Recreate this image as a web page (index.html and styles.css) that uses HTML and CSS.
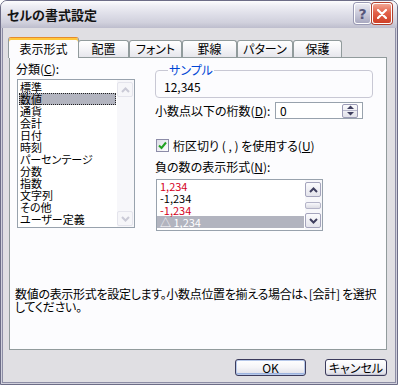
FILE: index.html
```html
<!DOCTYPE html>
<html lang="ja">
<head>
<meta charset="utf-8">
<title>セルの書式設定</title>
<link rel="stylesheet" href="styles.css">
</head>
<body>
<div class="window">
  <div class="titlebar">
    <span class="title">セルの書式設定</span>
    <div class="caption-buttons">
      <span class="cap-btn help">?</span>
      <span class="cap-btn close"><svg width="10" height="10" viewBox="0 0 10 10"><path d="M1 1L9 9M9 1L1 9" stroke="#fff" stroke-width="2.2" stroke-linecap="round"/></svg></span>
    </div>
  </div>
  <div class="client">
    <div class="tabs">
      <div class="tab active t1">表示形式</div>
      <div class="tab t2">配置</div>
      <div class="tab t3">フォント</div>
      <div class="tab t4">罫線</div>
      <div class="tab t5">パターン</div>
      <div class="tab t6">保護</div>
    </div>
    <div class="panel">
      <div class="panel-top">
        <div class="col-left">
          <div class="label">分類(<u>C</u>):</div>
          <div class="listbox cat">
            <div class="items">
              <div class="item">標準</div>
              <div class="item selected focus">数値</div>
              <div class="item">通貨</div>
              <div class="item">会計</div>
              <div class="item">日付</div>
              <div class="item">時刻</div>
              <div class="item">パーセンテージ</div>
              <div class="item">分数</div>
              <div class="item">指数</div>
              <div class="item">文字列</div>
              <div class="item">その他</div>
              <div class="item">ユーザー定義</div>
            </div>
            <div class="vscroll disabled">
              <div class="sbtn"><svg width="9" height="6" viewBox="0 0 9 6"><path d="M1 5L4.5 1.5L8 5" fill="none" stroke-width="2"/></svg></div>
              <div class="sbtn bottom"><svg width="9" height="6" viewBox="0 0 9 6"><path d="M1 1L4.5 4.5L8 1" fill="none" stroke-width="2"/></svg></div>
            </div>
          </div>
        </div>
        <div class="col-right">
          <fieldset class="sample">
            <legend>サンプル</legend>
            <div class="sample-value">12,345</div>
          </fieldset>
          <div class="decimals">
            <span>小数点以下の桁数(<u>D</u>):</span>
            <div class="spin">
              <span>0</span>
              <div class="spin-btns">
                <div class="spin-btn up"><svg width="7" height="4" viewBox="0 0 7 4"><path d="M0 4L3.5 0.5L7 4Z"/></svg></div>
                <div class="spin-btn down"><svg width="7" height="4" viewBox="0 0 7 4"><path d="M0 0L3.5 3.5L7 0Z"/></svg></div>
              </div>
            </div>
          </div>
          <div class="check-row">
            <span class="checkbox"><svg width="9" height="9" viewBox="0 0 9 9"><path d="M1 4.5L3.5 7L8 1.5" fill="none" stroke="#21a121" stroke-width="2"/></svg></span>
            <span>桁区切り ( , ) を使用する(<u>U</u>)</span>
          </div>
          <div class="label neg-label">負の数の表示形式(<u>N</u>):</div>
          <div class="listbox neg">
            <div class="items">
              <div class="item red">1,234</div>
              <div class="item">-1,234</div>
              <div class="item red">-1,234</div>
              <div class="item selected white">△ 1,234</div>
            </div>
            <div class="vscroll">
              <div class="sbtn"><svg width="9" height="6" viewBox="0 0 9 6"><path d="M1 5L4.5 1.5L8 5" fill="none" stroke-width="2"/></svg></div>
              <div class="thumb"></div>
              <div class="sbtn bottom"><svg width="9" height="6" viewBox="0 0 9 6"><path d="M1 1L4.5 4.5L8 1" fill="none" stroke-width="2"/></svg></div>
            </div>
          </div>
        </div>
      </div>
      <p class="desc">数値の表示形式を設定します。小数点位置を揃える場合は、[会計] を選択<br>してください。</p>
    </div>
    <div class="buttons">
      <button class="btn ok">OK</button>
      <button class="btn cancel">キャンセル</button>
    </div>
  </div>
</div>
</body>
</html>
```
FILE: styles.css
```css
body {
  margin: 0;
  width: 398px;
  height: 385px;
  overflow: hidden;
  background: #ffffff;
  font-family: "Noto Sans CJK JP", sans-serif;
  font-size: 12px;
  line-height: 12px;
  color: #000;
  font-feature-settings: "palt";
}

.window {
  box-sizing: border-box;
  width: 398px;
  height: 385px;
  border: 1px solid #6d6d87;
  border-radius: 7px 7px 0 0;
  display: flex;
  flex-direction: column;
  background: #e0dfe3;
  overflow: hidden;
}

.titlebar {
  flex: none;
  height: 27px;
  box-sizing: border-box;
  display: flex;
  align-items: flex-start;
  padding: 2px 5px 0 6px;
  background: linear-gradient(#fdfdfe 0%, #eeeef4 18%, #dedee8 50%, #d0d0dc 80%, #bdbdcd 100%);
}

.title {
  font-weight: bold;
  font-size: 13px;
  line-height: 21px;
  margin-top: 1px;
  color: #141414;
}

.caption-buttons {
  margin-left: auto;
  display: flex;
  gap: 1px;
}

.cap-btn {
  box-sizing: border-box;
  height: 21px;
  border: 1px solid #ffffff;
  border-radius: 3px;
  display: flex;
  align-items: center;
  justify-content: center;
}

.help {
  width: 17px;
  background: linear-gradient(#eaeaf2, #c4c4d6 60%, #a9a9c0);
  color: #55557a;
  font-weight: bold;
  font-size: 14px;
  line-height: 14px;
  font-family: "DejaVu Sans", sans-serif;
  box-shadow: 0 0 0 1px #9a9ab4;
}

.close {
  width: 20px;
  background: linear-gradient(#f2a693, #e2614a 45%, #cf4028);
  box-shadow: 0 0 0 1px #b0402e;
}

.client {
  flex: 1;
  display: flex;
  flex-direction: column;
  padding: 9px 9px 0 7px;
  border: solid #d0d0dc;
  border-width: 0 1px 1px 1px;
  box-shadow: inset 1px 0 #8d8da5, inset -1px 0 #8d8da5, inset 0 -1px #8d8da5;
}

.tabs {
  flex: none;
  height: 20px;
  display: flex;
  align-items: flex-end;
}

.tab {
  box-sizing: border-box;
  height: 17px;
  border: 1px solid #919b9c;
  border-bottom: 0;
  border-radius: 3px 3px 0 0;
  background: linear-gradient(#ffffff, #f4f4f7 50%, #e6e6ec);
  text-align: center;
  padding-top: 2px;
}

.tab.active {
  height: 21px;
  margin: 0 -1px -1px -1px;
  position: relative;
  background: #fcfcfe;
  border-top-color: #e68b2c;
  box-shadow: inset 0 2px #ffc83c;
  padding-top: 5px;
}

.t1 { width: 71px; }
.t2 { width: 51px; }
.t3 { width: 53px; }
.t4 { width: 55px; }
.t5 { width: 56px; }
.t6 { width: 49px; }

.panel {
  flex: none;
  box-sizing: border-box;
  height: 293px;
  border: 1px solid #919b9c;
  background: #fcfcfe;
  padding: 5px 0 0 6px;
}

.panel-top {
  display: flex;
  height: 168px;
}

.col-left {
  width: 119px;
}

.listbox {
  box-sizing: border-box;
  border: 1px solid #98a2ad;
  background: #ffffff;
  display: flex;
}

.cat {
  width: 118px;
  height: 149px;
  margin: 4px 0 0 1px;
}

.items {
  flex: 1;
}

.cat .items {
  padding-top: 1px;
}

.item {
  height: 12px;
  margin: 0 1px;
  padding-left: 1px;
  white-space: nowrap;
  font-size: 11px;
  line-height: 12px;
}

.neg .item {
  margin: 0 1px 0 0;
  padding-left: 3px;
}

.item.selected {
  background: #b2b4bf;
}

.item.focus {
  outline: 1px dotted #222;
  outline-offset: -1px;
}

.item.red { color: #d4001c; }
.item.white { color: #ffffff; }

.vscroll {
  width: 17px;
  box-sizing: border-box;
  display: flex;
  flex-direction: column;
  padding: 2px 1px 1px 0;
  background: #f7f7fa;
}

.sbtn {
  box-sizing: border-box;
  height: 15px;
  border: 1px solid #a4a4bc;
  border-radius: 2px;
  background: linear-gradient(#fbfbfd, #e4e4ec);
  display: flex;
  align-items: center;
  justify-content: center;
  stroke: #3f3f5f;
}

.sbtn.bottom {
  margin-top: auto;
}

.neg .vscroll {
  padding-bottom: 2px;
}

.thumb {
  box-sizing: border-box;
  height: 7px;
  margin-top: 5px;
  border: 1px solid #b4b4c8;
  border-radius: 2px;
  background: linear-gradient(#f8f8fb, #dcdce4);
}

.vscroll.disabled .sbtn {
  border-color: #e4e4ec;
  background: #f6f6f9;
  stroke: #cacad6;
}

.col-right {
  margin-left: 20px;
  width: 218px;
  padding-top: 1px;
  display: flex;
  flex-direction: column;
  align-items: flex-start;
}

.sample {
  box-sizing: border-box;
  width: 218px;
  min-width: 0;
  margin: 0;
  padding: 5px 0 4px 8px;
  border: 1px solid #c8c8d4;
  border-radius: 4px;
}

.sample legend {
  padding: 0 1px;
  margin-left: 4px;
  color: #0046d5;
  line-height: 12px;
}

.decimals {
  display: grid;
  grid-template-columns: 120px 88px;
  align-items: center;
  margin-top: 4px;
}

.spin {
  box-sizing: border-box;
  height: 17px;
  border: 1px solid #98a2ad;
  background: #ffffff;
  display: flex;
  align-items: center;
  padding-left: 4px;
}

.spin-btns {
  margin-left: auto;
  margin-right: 4px;
  width: 16px;
  height: 14px;
  box-sizing: border-box;
  border: 1px solid #9c9cb6;
  border-radius: 2px;
  display: flex;
  flex-direction: column;
  background: linear-gradient(#fbfbfd, #e2e2ea);
}

.spin-btn {
  flex: 1;
  display: flex;
  align-items: center;
  justify-content: center;
  fill: #3f3f5f;
}

.spin-btn.up {
  border-bottom: 1px solid #b8b8cc;
}

.check-row {
  display: flex;
  align-items: center;
  height: 13px;
  margin: 20px 0 0 1px;
}

.checkbox {
  box-sizing: border-box;
  width: 13px;
  height: 13px;
  border: 1px solid #8c8ca8;
  background: linear-gradient(135deg, #dcdce6, #ffffff);
  margin-right: 4px;
  display: flex;
  align-items: center;
  justify-content: center;
}

.neg-label {
  margin-top: 9px;
}

.neg {
  width: 167px;
  height: 52px;
  margin: 6px 0 0 1px;
}

.desc {
  margin: 56px 0 0 -1px;
  line-height: 13px;
  white-space: nowrap;
  letter-spacing: -0.3px;
}

.buttons {
  flex: none;
  display: flex;
  justify-content: flex-end;
  gap: 19px;
  margin-top: 9px;
}

.btn {
  box-sizing: border-box;
  height: 17px;
  padding: 0;
  font: inherit;
  line-height: 15px;
  color: #000;
  border: 1px solid #3b3b5c;
  border-radius: 3px;
  background: linear-gradient(#ffffff, #f4f4f7 50%, #e4e4eb 85%, #d2d2dc);
}

.ok {
  width: 71px;
  box-shadow: inset 0 0 0 1px #b6c8ea, inset 0 -2px #9cb3df;
}

.cancel {
  width: 62px;
  box-shadow: inset 0 -1px #c6c6d2;
}
```
